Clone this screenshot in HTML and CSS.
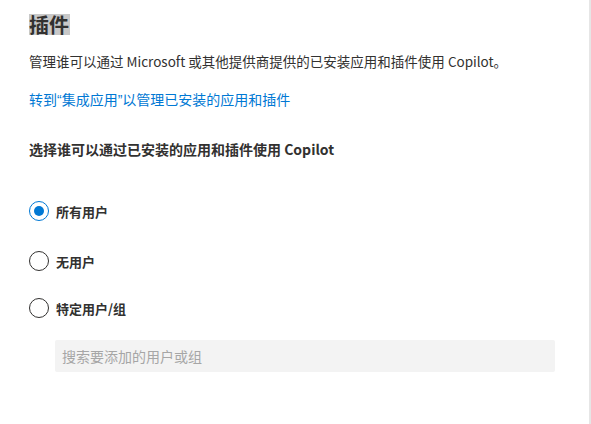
FILE: index.html
```html
<!DOCTYPE html>
<html lang="zh-CN">

<head>
    <meta charset="UTF-8">
    <title>插件</title>
    <link rel="stylesheet" href="styles.css">
</head>

<body>
    <div class="panel">
        <h1 class="title"><span>插件</span></h1>
        <p class="desc">管理谁可以通过 Microsoft 或其他提供商提供的已安装应用和插件使用 Copilot。</p>
        <a class="link" href="#">转到<q>“</q>集成应用<q>”</q>以管理已安装的应用和插件</a>
        <h2 class="sub">选择谁可以通过已安装的应用和插件使用 Copilot</h2>
        <div class="options">
            <label class="option checked"><span class="radio"></span>所有用户</label>
            <label class="option"><span class="radio"></span>无用户</label>
            <label class="option last"><span class="radio"></span>特定用户/组</label>
        </div>
        <div class="search">搜索要添加的用户或组</div>
    </div>
</body>

</html>
```

FILE: styles.css
```css
* {
    margin: 0;
    padding: 0;
    box-sizing: border-box;
}

body {
    font-family: "Noto Sans CJK SC", "Noto Sans", sans-serif;
    font-size: 14px;
    color: #323130;
    background: #fff;
}

.panel {
    width: 591px;
    height: 424px;
    padding: 14px 0 0 29px;
    border-right: 2px solid #e6e6e6;
}

.title {
    font-size: 20px;
    line-height: 21px;
    font-weight: 700;
}

.title span {
    display: inline-block;
    background: #c8c8c8;
    padding: 0 1px 0 0;
}

.desc {
    margin-top: 16px;
    line-height: 20px;
    font-size: 13.5px;
}

.link {
    display: block;
    margin-top: 18px;
    height: 20px;
    line-height: 20px;
    color: #0078d4;
    text-decoration: none;
}

.link q {
    quotes: none;
    font-family: "Liberation Sans", sans-serif;
}

.sub {
    margin-top: 30px;
    font-size: 14px;
    line-height: 20px;
    font-weight: 600;
}

.options {
    margin-top: 42px;
    display: flex;
    flex-direction: column;
    gap: 30px;
}

.option {
    display: flex;
    align-items: center;
    gap: 7px;
    height: 20px;
    font-size: 13px;
    font-weight: 600;
}

.option.last {
    margin-top: -3px;
}

.radio {
    width: 20px;
    height: 20px;
    border: 1px solid #323130;
    border-radius: 50%;
    display: flex;
    align-items: center;
    justify-content: center;
}

.checked .radio {
    border-color: #0078d4;
}

.checked .radio::after {
    content: "";
    width: 10px;
    height: 10px;
    border-radius: 50%;
    background: #0078d4;
}

.search {
    margin: 22px 0 0 26px;
    width: 500px;
    height: 32px;
    line-height: 32px;
    padding-left: 7px;
    background: #f3f3f3;
    border-radius: 2px;
    color: #a6a6a6;
}
```
